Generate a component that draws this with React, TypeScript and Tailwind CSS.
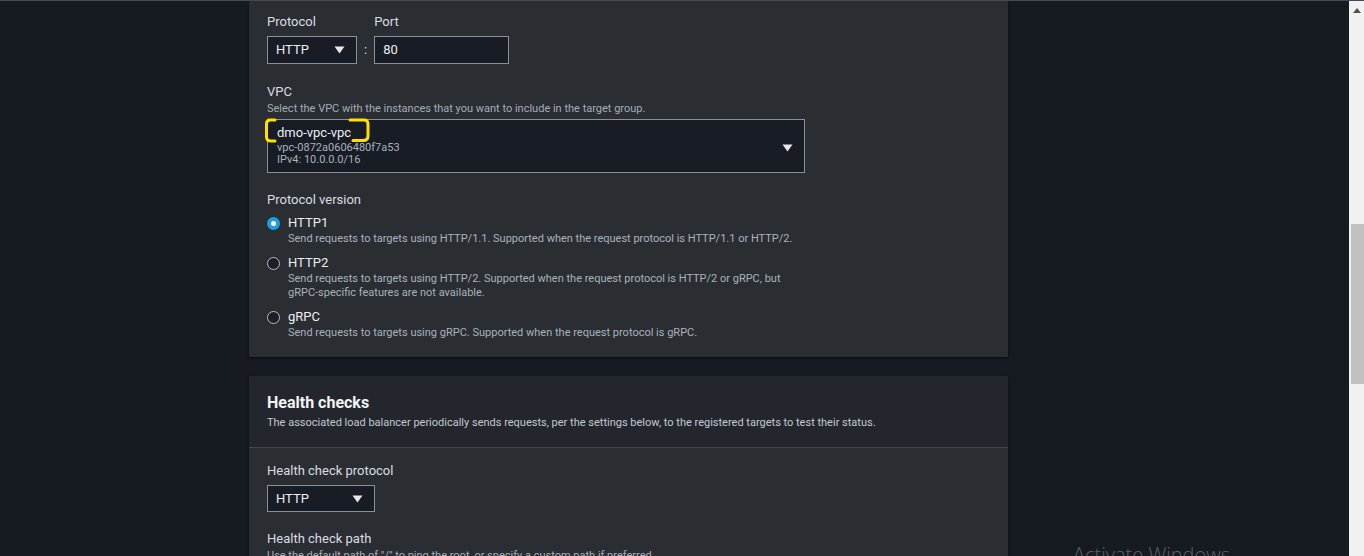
import React from "react";

const font = { fontFamily: "Roboto, 'Noto Sans', sans-serif" };

function Caret({ className = "" }: { className?: string }) {
  return (
    <svg width="11" height="8" viewBox="0 0 11 8" className={className}>
      <path d="M0.5 0.5 H10.5 L5.5 7.5 Z" fill="#e6e8eb" />
    </svg>
  );
}

function Select({ value, width, height = "h-[28px]" }: { value: string; width: string; height?: string }) {
  return (
    <div
      className={`flex items-center justify-between border border-[#8a9199] bg-[#181c24] pl-[8px] pr-[11px] text-[13px] text-[#eceef1] ${width} ${height}`}
    >
      <span>{value}</span>
      <Caret />
    </div>
  );
}

function Radio({
  checked,
  label,
  lines,
}: {
  checked?: boolean;
  label: string;
  lines: string[];
}) {
  return (
    <div className="flex gap-[8px]">
      <div className="pt-[3px]">
        {checked ? (
          <div className="w-[13px] h-[13px] rounded-full bg-[#1a9fe0] flex items-center justify-center">
            <div className="w-[5px] h-[5px] rounded-full bg-white" />
          </div>
        ) : (
          <div className="w-[13px] h-[13px] rounded-full border-[1.5px] border-[#b6bec8] bg-[#1b1f26]" />
        )}
      </div>
      <div>
        <div className="text-[13px] leading-[18px] text-[#eceef1]">{label}</div>
        {lines.map((l) => (
          <div key={l} className="text-[11px] leading-[14px] text-[#a9b2bd]">
            {l}
          </div>
        ))}
      </div>
    </div>
  );
}

function Label({ children }: { children: React.ReactNode }) {
  return <div className="text-[13px] leading-[20px] text-[#d9dde2]">{children}</div>;
}

export default function App() {
  return (
    <div
      className="w-[1364px] h-[556px] overflow-hidden relative flex bg-[#161a21] border-t border-[#454b54]"
      style={font}
    >
      <div className="w-[249px] shrink-0" />

      <div className="w-[759px] shrink-0 flex flex-col gap-[19px]">
        {/* Target group settings (continued) */}
        <div className="bg-[#2a2e33] px-[18px] pt-[11px] pb-[17px] shadow-[0_1px_2px_rgba(0,0,0,0.6)]">
          <div className="flex items-end gap-[7px]">
            <div className="flex flex-col gap-[4px]">
              <Label>Protocol</Label>
              <Select value="HTTP" width="w-[90px]" />
            </div>
            <div className="h-[28px] flex items-center text-[13px] text-[#d9dde2]">:</div>
            <div className="flex flex-col gap-[4px]">
              <Label>Port</Label>
              <div className="h-[28px] w-[135px] border border-[#8a9199] bg-[#181c24] px-[8px] flex items-center text-[13px] text-[#eceef1]">
                80
              </div>
            </div>
          </div>

          <div className="mt-[18px]">
            <Label>VPC</Label>
            <div className="text-[11px] leading-[14px] text-[#a3adb8]">
              Select the VPC with the instances that you want to include in the target group.
            </div>
            <div className="relative mt-[3px] w-[538px] h-[54px] border border-[#8a9199] bg-[#181c24] pl-[9px] pr-[11px] pt-[4px] flex items-center justify-between">
              <div className="self-start">
                <div className="text-[13px] leading-[18px] text-[#eceef1]">dmo-vpc-vpc</div>
                <div className="text-[11px] leading-[12px] text-[#a9b2bd]">vpc-0872a0606480f7a53</div>
                <div className="text-[11px] leading-[12px] text-[#a9b2bd]">IPv4: 10.0.0.0/16</div>
              </div>
              <Caret />
              {/* yellow highlight annotation */}
              <svg
                className="absolute left-[-6px] top-[-3px]"
                width="112"
                height="28"
                viewBox="0 0 112 28"
                fill="none"
                stroke="#ffe000"
                strokeWidth="3"
                strokeLinecap="round"
              >
                <path d="M13 3 H8 Q4.5 3 4.5 7 V20 Q4.5 24 9 24 H13" />
                <path d="M88 3 H102 Q106 3 106 7 V19 Q106 23.5 101 23.5 H91" />
              </svg>
            </div>
          </div>

          <div className="mt-[17px]">
            <Label>Protocol version</Label>
            <div className="mt-[4px] flex flex-col gap-[8px]">
              <Radio
                checked
                label="HTTP1"
                lines={[
                  "Send requests to targets using HTTP/1.1. Supported when the request protocol is HTTP/1.1 or HTTP/2.",
                ]}
              />
              <Radio
                label="HTTP2"
                lines={[
                  "Send requests to targets using HTTP/2. Supported when the request protocol is HTTP/2 or gRPC, but",
                  "gRPC-specific features are not available.",
                ]}
              />
              <Radio
                label="gRPC"
                lines={["Send requests to targets using gRPC. Supported when the request protocol is gRPC."]}
              />
            </div>
          </div>
        </div>

        {/* Health checks */}
        <div className="bg-[#2a2e33] flex-1 shadow-[0_1px_2px_rgba(0,0,0,0.6)]">
          <div className="bg-[#23272d] px-[18px] pt-[15px] pb-[17px] border-b border-[#414750]">
            <div className="text-[16px] leading-[24px] font-bold text-[#f1f3f5]">Health checks</div>
            <div className="mt-[1px] text-[11px] leading-[14px] text-[#c3c9d0]">
              The associated load balancer periodically sends requests, per the settings below, to the registered
              targets to test their status.
            </div>
          </div>
          <div className="px-[18px] pt-[13px]">
            <Label>Health check protocol</Label>
            <div className="mt-[4px]">
              <Select value="HTTP" width="w-[108px]" height="h-[27px]" />
            </div>
            <div className="mt-[17px]">
              <Label>Health check path</Label>
              <div className="text-[11px] leading-[14px] text-[#a3adb8]">
                Use the default path of "/" to ping the root, or specify a custom path if preferred.
              </div>
            </div>
          </div>
        </div>
      </div>

      <div className="flex-1" />

      {/* browser scrollbar */}
      <div className="w-[15px] shrink-0 bg-[#f1f1f1] flex flex-col">
        <div className="h-[17px] flex items-center justify-center pt-[1px]">
          <svg width="8" height="5" viewBox="0 0 8 5">
            <path d="M0 5 L4 0 L8 5 Z" fill="#505050" />
          </svg>
        </div>
        <div className="mt-[206px] ml-[2px] h-[160px] bg-[#c1c1c1]" />
      </div>

      {/* OS watermark */}
      <div
        className="absolute left-[1073px] top-[540px] text-[20px] leading-[28px] font-light text-[#5c6066] whitespace-nowrap"
        style={{ fontFamily: "'Open Sans', sans-serif" }}
      >
        Activate Windows
      </div>
    </div>
  );
}
